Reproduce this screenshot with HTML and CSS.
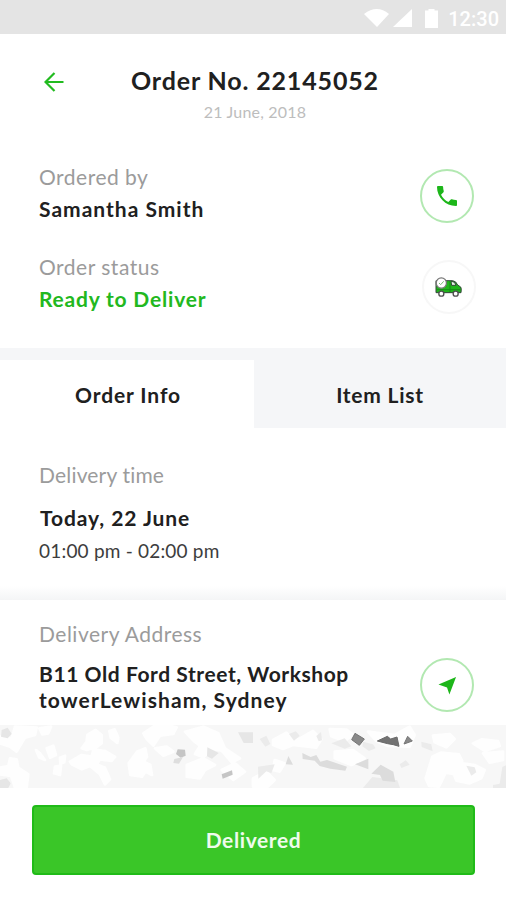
FILE: index.html
```html
<!DOCTYPE html>
<html lang="en">
<head>
<meta charset="utf-8">
<title>Order No. 22145052</title>
<link rel="stylesheet" href="styles.css">
</head>
<body>
<div class="statusbar">
  <svg class="signals" viewBox="0 0 80 24" aria-hidden="true">
    <path d="M0 7Q13-3 25 7L13 20Z"/>
    <path d="M29 20 48 2V20Z"/>
    <path d="M61 3.500h3.500V2h6v1.500H74V21H61Z"/>
  </svg>
  <span class="clock">12:30</span>
</div>
<header class="header">
  <svg class="back" viewBox="0 0 20 20" aria-hidden="true"><path d="M10.500 1 1.500 10l9 9M1.500 10H19.500"/></svg>
  <div class="heading">
    <h1 class="title">Order No. 22145052</h1>
    <p class="date">21 June, 2018</p>
  </div>
</header>
<main>
  <section class="row ordered">
    <div>
      <p class="label">Ordered by</p>
      <p class="value name">Samantha Smith</p>
    </div>
    <span class="circle">
      <svg class="phone" viewBox="3 3 18 18" aria-hidden="true"><path d="M6.620 10.790c1.440 2.830 3.760 5.140 6.590 6.590l2.200-2.200c.270-.270.670-.360 1.020-.240 1.120.370 2.330.570 3.570.570.550 0 1 .450 1 1V20c0 .550-.450 1-1 1-9.390 0-17-7.610-17-17 0-.550.450-1 1-1h3.500c.550 0 1 .450 1 1 0 1.250.200 2.450.570 3.570.110.350.030.740-.250 1.020l-2.200 2.200z"/></svg>
    </span>
  </section>
  <section class="row status">
    <div>
      <p class="label">Order status</p>
      <p class="value ready">Ready to Deliver</p>
    </div>
    <span class="circle pale">
      <svg class="van" viewBox="0 0 81 60" aria-hidden="true">
        <path d="M3 11H53Q63 12 68 24L77 30Q80 34 78 47H3Z" fill="#20b51b" stroke="#34463a" stroke-width="3"/>
        <path d="M48 14H54Q60 15 63 25H50Z" fill="#e8f5e8" stroke="#34463a" stroke-width="3"/>
        <path d="M45 12V45M5 38H76" fill="none" stroke="#168b17" stroke-width="3"/>
        <circle cx="19" cy="50" r="7.500" fill="#fff" stroke="#4f4f4f" stroke-width="4"/>
        <circle cx="62" cy="50" r="7.500" fill="#fff" stroke="#4f4f4f" stroke-width="4"/>
        <circle cx="19" cy="18" r="15.500" fill="#fff" stroke="#777" stroke-width="4"/>
        <path d="M12 18l5 5 9-10" fill="none" stroke="#76bd73" stroke-width="3"/>
      </svg>
    </span>
  </section>
  <nav class="tabs">
    <span class="tab active"><b>Order Info</b></span>
    <span class="tab"><b>Item List</b></span>
  </nav>
  <section class="delivery">
    <p class="label time-label">Delivery time</p>
    <p class="value day">Today, 22 June</p>
    <p class="hours">01:00 pm - 02:00 pm</p>
  </section>
  <section class="row address">
    <div>
      <p class="label">Delivery Address</p>
      <p class="value lines">B11 Old Ford Street, Workshop<br><span class="suburb">towerLewisham, Sydney</span></p>
    </div>
    <span class="circle">
      <svg class="arrow" viewBox="0 0 20 20" aria-hidden="true"><path d="M19 1 12 19.500 9.500 12 .500 9Z"/></svg>
    </span>
  </section>
  <svg class="map" viewBox="0 30 1518 189" preserveAspectRatio="none" aria-hidden="true">
    <g class="blocks">
      <path d="M0 65 35 70 45 35 110 38 105 60 75 68 50 110 30 95 0 85ZM118 40l35-5-8 20-18 3ZM262 60l25-15 18 15v25l-15 12-30 8-15-5 15-20ZM328 48l16-5 11 25-3 16-20-16ZM30 130l20 3 5 25 30 20-5 40H45l-12-35-33-5v-20l25-5ZM108 105l12 10 15 20-18-8ZM140 100l20-8 8 28-18 8ZM180 128l15-6-2 20-12 5ZM165 155l18-3-3 28-18-5ZM210 140l35-20 30 5 5-22 35 5 30 18-10 12-35-5-10 15 25 10 15 35-15 15-15-30-30-25-25 10-30-15ZM386 145l25-35 25-10 5 25-10 15 20 10 5 30-20-10-10 15-35-5ZM430 55l45-30 55 12-10 20-40 5-20 30-20-20ZM555 50l55-15 45 20 20 45 45 30-25 12-30-35-30-5-25 25-25-10 15-25-20-15ZM560 150l50-20 35 20-30 15-15 25-40-5ZM665 165l40-20 30 25-35 25ZM465 100l35-5 20 15-30 12Z"/>
    </g>
    <g class="blocks" transform="translate(759 0)">
      <path d="M60 75l40-22 25 25 20-10 35-20 25 25-15 25-70-8-30 12-30-12ZM230 42l50 2 20 15-25 20-40-15ZM345 50l80 10 45-25 15 25-15 35-65-2-35-15ZM540 62l50-5 15 15-25 25-35-15ZM660 85l25-12 50 5 5 15-45 15ZM518 190l20-65 25-12 55 5 10 20-20 40-30-5-20 42-30-2ZM600 170l30-25 35 5 30 15-10 25-35 15-40-8ZM65 135l30 10-15 25-20-5ZM245 110l55-5 35 25-40 20-50-20ZM0 190l40-20 25 25-20 20H0ZM690 115l60-5v25l-40 8Z"/>
    </g>
    <path fill="#e6e6e6" d="M5 45l18-7 12 18-12 14-20-5ZM0 195l20-5 12 15-7 14H0ZM622 97l34 17-20 17-15-7ZM714 52h45v32h-28Z"/>
    <path fill="#c5c5c5" d="M533 103l22 1 2 18-15 6-14-11ZM665 178l31-12 2 13-30 12Z"/>
    <path fill="#dedede" d="M523 132l26-6-12 20-17-2Z"/>
    <g transform="translate(759 0)">
      <path fill="#ebebeb" d="M108 57l20-8 12 13-17 15ZM190 63l14-12 3 25-10 3ZM20 72l20-10 12 25-15 8ZM235 85l40-15 20 24-20 7ZM330 80l30 8 8 12-20 8-20-14ZM505 80l30 8 4 21-33-13ZM15 155l50-7-10 27-15-6-24 22ZM440 148l18-12 12 13-25 10ZM640 152l25 5 5 15-15 10ZM330 219l28-33 75 10 8 23ZM720 210l20-4 8-50 11-5v68h-39Z"/>
      <path fill="#dcdcdc" d="M98 148l8-25 14 26ZM148 114l25 12 17-6 12 20 20-5 60 20-5 12-45-6-32-8-15-16-36-5ZM306 148l40-17v32ZM355 176l28-27 38 21 6 31-38-4-8-17Z"/>
      <path fill="#898989" stroke="#757575" stroke-width="3" d="M306 55l28 17-15 19-23-17ZM453 87l11-23 14 14Z"/>
      <path fill="#737373" stroke="#6b6b6b" stroke-width="3" d="M373 78l30-14 10 8 19-6 6 28-17-5-17-3Z"/>
    </g>
  </svg>
</main>
<footer class="footer"><button class="cta"><span>Delivered</span></button></footer>
</body>
</html>
```
FILE: styles.css
```css
* { box-sizing: border-box; }
body { margin: 0; width: 506px; height: 900px; overflow: hidden; background: #fff; color: #202020; font-family: Lato, "Open Sans", sans-serif; }
h1, p { margin: 0; white-space: nowrap; }
svg { display: block; flex: none; }

.statusbar { height: 34px; background: #e4e4e4; display: flex; align-items: center; justify-content: flex-end; gap: 4px; padding: 4px 7px 0 0; color: #fff; }
.signals { width: 80px; height: 24px; fill: #fff; }
.clock { font: 500 20px/28px Roboto, sans-serif; }

.header { height: 126px; padding: 29px 0 0 44px; display: flex; align-items: flex-start; }
.back { width: 20px; height: 20px; margin-top: 9px; fill: none; stroke: #22bb20; stroke-width: 2.2; }
.heading { flex: 1; padding-right: 60px; text-align: center; }
.title { font-size: 25px; line-height: 34px; font-weight: 700; letter-spacing: .85px; }
.date { font-size: 16px; line-height: 22px; margin-top: 4px; color: #bdbdbd; letter-spacing: .2px; }

.row { display: flex; justify-content: space-between; padding: 0 32px 0 39px; }
.label { font-size: 21px; line-height: 28px; color: #9b9b9b; letter-spacing: .5px; }
.value { font-size: 21px; line-height: 28px; font-weight: 700; letter-spacing: .57px; }
.ordered { height: 90px; padding-top: 3px; }
.ordered .value, .status .value { margin-top: 4px; }
.name { letter-spacing: 1px; }
.status { height: 98px; padding-top: 3px; }
.ready { color: #22b820; letter-spacing: .8px; }
.circle { flex: none; width: 54px; height: 54px; margin-top: 6px; border: 2px solid #b2e8b1; border-radius: 50%; display: flex; align-items: center; justify-content: center; }
.circle.pale { border-color: #f7f7f7; margin: 7px -2px 0 0; }
.phone { width: 20px; height: 20px; fill: #1db61a; }
.van { width: 27px; height: 20px; margin-right: 2px; }

.tabs { height: 80px; padding-top: 12px; background: #f5f6f8; display: flex; }
.tab { flex: 1; display: flex; align-items: center; justify-content: center; font-size: 21px; line-height: 28px; letter-spacing: .75px; padding-top: 2px; }
.tab.active { flex: 0 0 254px; background: #fff; letter-spacing: .9px; padding-left: 2px; }

.delivery { height: 172px; padding: 33px 39px 0; background: linear-gradient(#fff 158px, #f4f5f6 172px); }
.time-label { letter-spacing: .18px; }
.day { margin: 15px 0 0 1px; letter-spacing: .93px; }
.hours { font-size: 19px; line-height: 26px; margin-top: 6px; color: #3d3d3d; letter-spacing: .2px; }
.address { height: 125px; padding-top: 20px; }
.lines { margin-top: 13px; line-height: 26px; }
.suburb { letter-spacing: 1.1px; }
.address .circle { margin-top: 38px; }
.arrow { width: 19px; height: 19px; fill: #1db61a; }
.map { width: 506px; height: 63px; background: #f7f7f7; }
.blocks { fill: #fefefe; stroke: #fefefe; stroke-width: 8; stroke-linejoin: round; }

.footer { padding: 17px 31px 0 32px; }
.cta { display: block; width: 100%; height: 70px; padding: 0; border: 2px solid #20bb18; border-radius: 4px; background: #3ac628; color: #effbed; font: 700 21px/28px Lato, sans-serif; letter-spacing: .6px; }
```
